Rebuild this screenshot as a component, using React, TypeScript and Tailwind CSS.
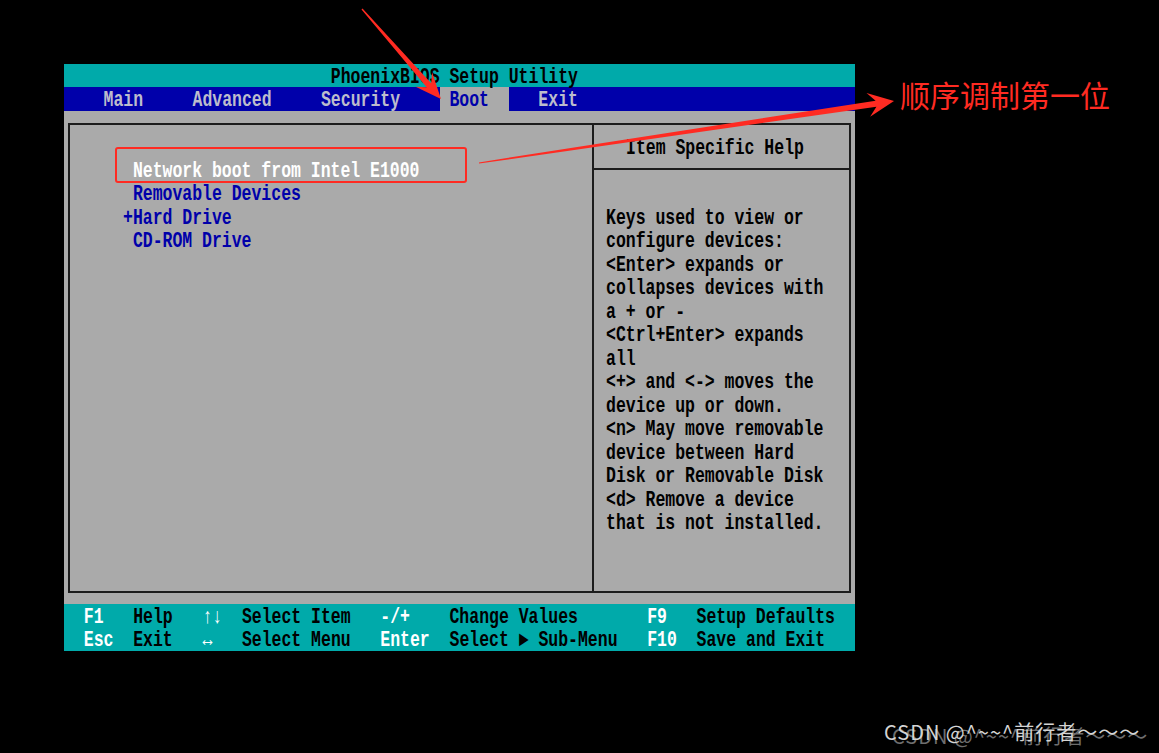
type Seg = [number, string, string?];

const WHITE = "text-white";

// one 80-column text row; segs are placed at character columns
function Line({ segs, className = "" }: { segs: Seg[]; className?: string }) {
  let col = 0;
  const parts = segs.map(([c, text, color], i) => {
    const pad = " ".repeat(Math.max(0, c - col));
    col = c + [...text].length;
    return (
      <span key={i} className={color}>
        {pad + text}
      </span>
    );
  });
  return (
    <div className={`h-[23.48px] leading-[23.48px] whitespace-pre ${className}`}>
      <span className="inline-block translate-y-[2px] scale-y-[1.3]">{parts}</span>
    </div>
  );
}

function arrow(x1: number, y1: number, x2: number, y2: number, L: number, W: number, w: number) {
  const dx = x2 - x1;
  const dy = y2 - y1;
  const len = Math.hypot(dx, dy);
  const ux = dx / len;
  const uy = dy / len;
  const nx = -uy;
  const ny = ux;
  const bx = x2 - ux * L;
  const by = y2 - uy * L;
  const jx = x2 - ux * L * 0.7;
  const jy = y2 - uy * L * 0.7;
  const pts = [
    [x1 + nx * 0.6, y1 + ny * 0.6],
    [jx + nx * w, jy + ny * w],
    [bx + nx * W, by + ny * W],
    [x2, y2],
    [bx - nx * W, by - ny * W],
    [jx - nx * w, jy - ny * w],
    [x1 - nx * 0.6, y1 - ny * 0.6],
  ];
  return pts.map((p) => p.map((v) => v.toFixed(1)).join(",")).join(" ");
}

const help = [
  "Keys used to view or",
  "configure devices:",
  "<Enter> expands or",
  "collapses devices with",
  "a + or -",
  "<Ctrl+Enter> expands",
  "all",
  "<+> and <-> moves the",
  "device up or down.",
  "<n> May move removable",
  "device between Hard",
  "Disk or Removable Disk",
  "<d> Remove a device",
  "that is not installed.",
];

const items = [
  { text: " Network boot from Intel E1000", color: "text-white" },
  { text: " Removable Devices", color: "text-[#0000aa]" },
  { text: "+Hard Drive", color: "text-[#0000aa]" },
  { text: " CD-ROM Drive", color: "text-[#0000aa]" },
];

export default function App() {
  return (
    <div className="relative h-[753px] w-[1159px] overflow-hidden bg-black pl-[64px] pt-[64px] font-['Liberation_Mono',monospace] text-[16.48px] font-bold">
      <div className="w-[791px]">
        {/* title */}
        <Line segs={[[27, "PhoenixBIOS Setup Utility"]]} className="bg-[#00aaaa] text-black" />

        {/* menu bar */}
        <div className="flex h-[23.48px] bg-[#0000aa] text-[#bcbccc]">
          <Line segs={[[4, "Main"], [13, "Advanced"], [26, "Security"]]} className="w-[38ch]" />
          <Line segs={[[1, "Boot"]]} className="w-[7ch] bg-[#aaaaaa] text-[#0000aa]" />
          <Line segs={[[3, "Exit"]]} />
        </div>

        {/* body */}
        <div className="h-[493px] bg-[#aaaaaa] px-[4px] pb-[11px] pt-[12px]">
          <div className="flex h-full border-2 border-[#1c1c1c]">
            <div className="w-[524px] border-r-2 border-[#1c1c1c] pl-[53px] pt-[33px]">
              {items.map((it) => (
                <Line key={it.text} segs={[[0, it.text]]} className={it.color} />
              ))}
            </div>
            <div className="flex flex-1 flex-col">
              <div className="flex h-[45px] items-center border-b-2 border-[#1c1c1c] pl-[32px] text-black">
                <Line segs={[[0, "Item Specific Help"]]} />
              </div>
              <div className="pl-[12px] pt-[35px] text-black">
                {help.map((h) => (
                  <Line key={h} segs={[[0, h]]} />
                ))}
              </div>
            </div>
          </div>
        </div>

        {/* key legend */}
        <div className="bg-[#00aaaa] text-black">
          <Line
            segs={[
              [2, "F1", WHITE],
              [7, "Help"],
              [14, "↑↓", WHITE],
              [18, "Select Item"],
              [32, "-/+", WHITE],
              [39, "Change Values"],
              [59, "F9", WHITE],
              [64, "Setup Defaults"],
            ]}
          />
          <Line
            segs={[
              [2, "Esc", WHITE],
              [7, "Exit"],
              [14, "↔", WHITE],
              [18, "Select Menu"],
              [32, "Enter", WHITE],
              [39, "Select ► Sub-Menu"],
              [59, "F10", WHITE],
              [64, "Save and Exit"],
            ]}
          />
        </div>
      </div>

      {/* annotations drawn over the screenshot */}
      <div className="absolute left-[115px] top-[147px] h-[36px] w-[352px] rounded-[3px] border-2 border-[#ff2b22]" />
      <svg className="pointer-events-none absolute left-0 top-0 h-[753px] w-[1159px]" viewBox="0 0 1159 753">
        <polygon points={arrow(362, 9, 441, 99, 26, 11, 3)} fill="#ff2b22" />
        <polygon points={arrow(479, 163, 894, 101, 26, 12, 3)} fill="#ff2b22" />
      </svg>
      <div className="absolute left-[900px] top-[78px] font-['Noto_Sans_CJK_SC',sans-serif] text-[30px] font-normal leading-[32px] text-[#ff2b22]">
        顺序调制第一位
      </div>
      <div className="absolute left-[884px] top-[720px] whitespace-nowrap font-['Noto_Sans_CJK_SC',sans-serif] text-[20px] font-normal leading-[24px] tracking-[1px] text-[#d4d4d4] [text-shadow:8px_4px_0_#6e6e6e]">
        CSDN @^~~^前行者～～～
      </div>
    </div>
  );
}
